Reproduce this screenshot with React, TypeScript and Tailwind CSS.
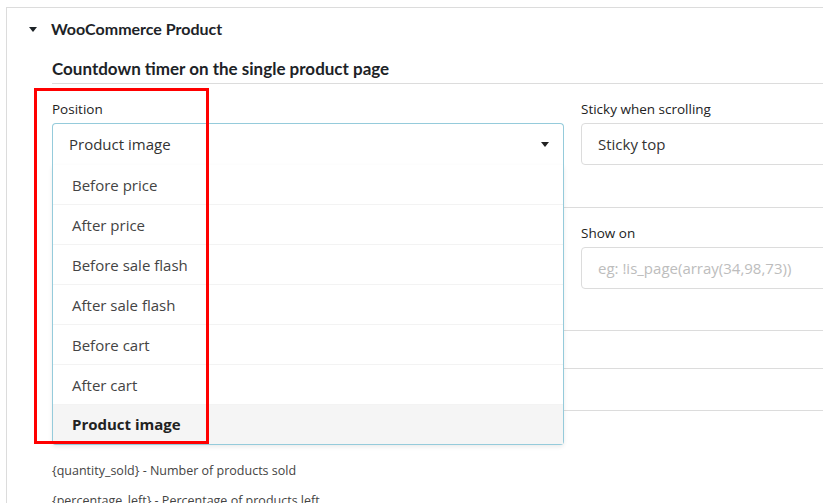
import React from "react";

const positions = [
  "Before price",
  "After price",
  "Before sale flash",
  "After sale flash",
  "Before cart",
  "After cart",
  "Product image",
];

const Caret = ({ className }: { className?: string }) => (
  <svg width="8" height="5" viewBox="0 0 8 5" className={className}>
    <path d="M0 0h8L4 5z" fill="currentColor" />
  </svg>
);

const PositionSelect = () => {
  const selected = "Product image";
  return (
    <div className="relative">
      <div className="flex h-[42px] items-center justify-between rounded-t-[4px] border-x border-t border-[#95cbdb] pl-[16px] pr-[14px] text-[15px] text-[#333]">
        <span>{selected}</span>
        <Caret className="text-[#222]" />
      </div>
      <ul className="absolute left-0 right-0 top-full z-10 rounded-b-[4px] border-x border-b border-[#95cbdb] bg-white shadow-[0_2px_4px_rgba(0,0,0,0.08)]">
        {positions.map((p) => (
          <li
            key={p}
            className={
              p === selected
                ? "flex h-[39px] items-center bg-[#f5f5f5] pl-[19px] text-[15px] font-bold text-[#222]"
                : "flex h-[40px] items-center border-b border-[#f3f3f3] pl-[19px] pt-[1px] text-[15px] text-[#444]"
            }
          >
            {p}
          </li>
        ))}
      </ul>
    </div>
  );
};

const Field = ({ label, children }: { label: string; children: React.ReactNode }) => (
  <div>
    <div className="mt-[17px] text-[13.5px] leading-[16px] text-[#222]">{label}</div>
    <div className="mt-[6px]">{children}</div>
  </div>
);

const TextBox = ({ value, placeholder }: { value?: string; placeholder?: string }) => (
  <div className="flex h-[42px] items-center rounded-[4px] border border-[#dcdcdc] pl-[16px] text-[15px]">
    {value ? <span className="text-[#333]">{value}</span> : <span className="text-[#bdbdbd]">{placeholder}</span>}
  </div>
);

export default function App() {
  return (
    <div className="relative h-[503px] w-[823px] overflow-hidden bg-white font-['Open_Sans',sans-serif]">
      <div className="ml-[6px] mt-[7px] w-[1200px] border-l border-t border-[#dcdcdc]">
        <div className="flex h-[42px] items-center gap-[14px] pl-[22px] font-['Lato',sans-serif] text-[16px] font-bold text-[#1d2327]">
          <Caret className="text-[#1d2327]" />
          <span>WooCommerce Product</span>
        </div>

        <div className="px-[45px]">
          <div className="mt-[7px] border-b border-[#dcdcdc] pb-[2px] font-['Lato',sans-serif] text-[17px] font-bold leading-[24px] text-[#1d2327]">
            Countdown timer on the single product page
          </div>

          <div className="grid grid-cols-[512px_512px] gap-x-[17px] border-b border-[#dcdcdc] pb-[42px]">
            <Field label="Position">
              <PositionSelect />
            </Field>
            <Field label="Sticky when scrolling">
              <TextBox value="Sticky top" />
            </Field>
          </div>

          <div className="grid grid-cols-[512px_512px] gap-x-[17px] border-b border-[#dcdcdc] pb-[41px]">
            <div />
            <div>
              <Field label="Show on">
                <TextBox placeholder="eg: !is_page(array(34,98,73))" />
              </Field>
            </div>
          </div>

          <div className="h-[38px] border-b border-[#dcdcdc]" />
          <div className="h-[42px] border-b border-[#dcdcdc]" />

          <div className="mt-[51px] text-[12.5px] leading-[18px] text-[#444]">
            {"{quantity_sold}"} - Number of products sold
          </div>
          <div className="mt-[12px] text-[12.5px] leading-[18px] text-[#444]">
            {"{percentage_left}"} - Percentage of products left
          </div>
        </div>
      </div>

      {/* highlight box drawn over the position picker */}
      <div className="pointer-events-none absolute left-[34px] top-[88px] z-20 h-[356px] w-[175px] border-[3px] border-[#ff0000]" />
    </div>
  );
}
